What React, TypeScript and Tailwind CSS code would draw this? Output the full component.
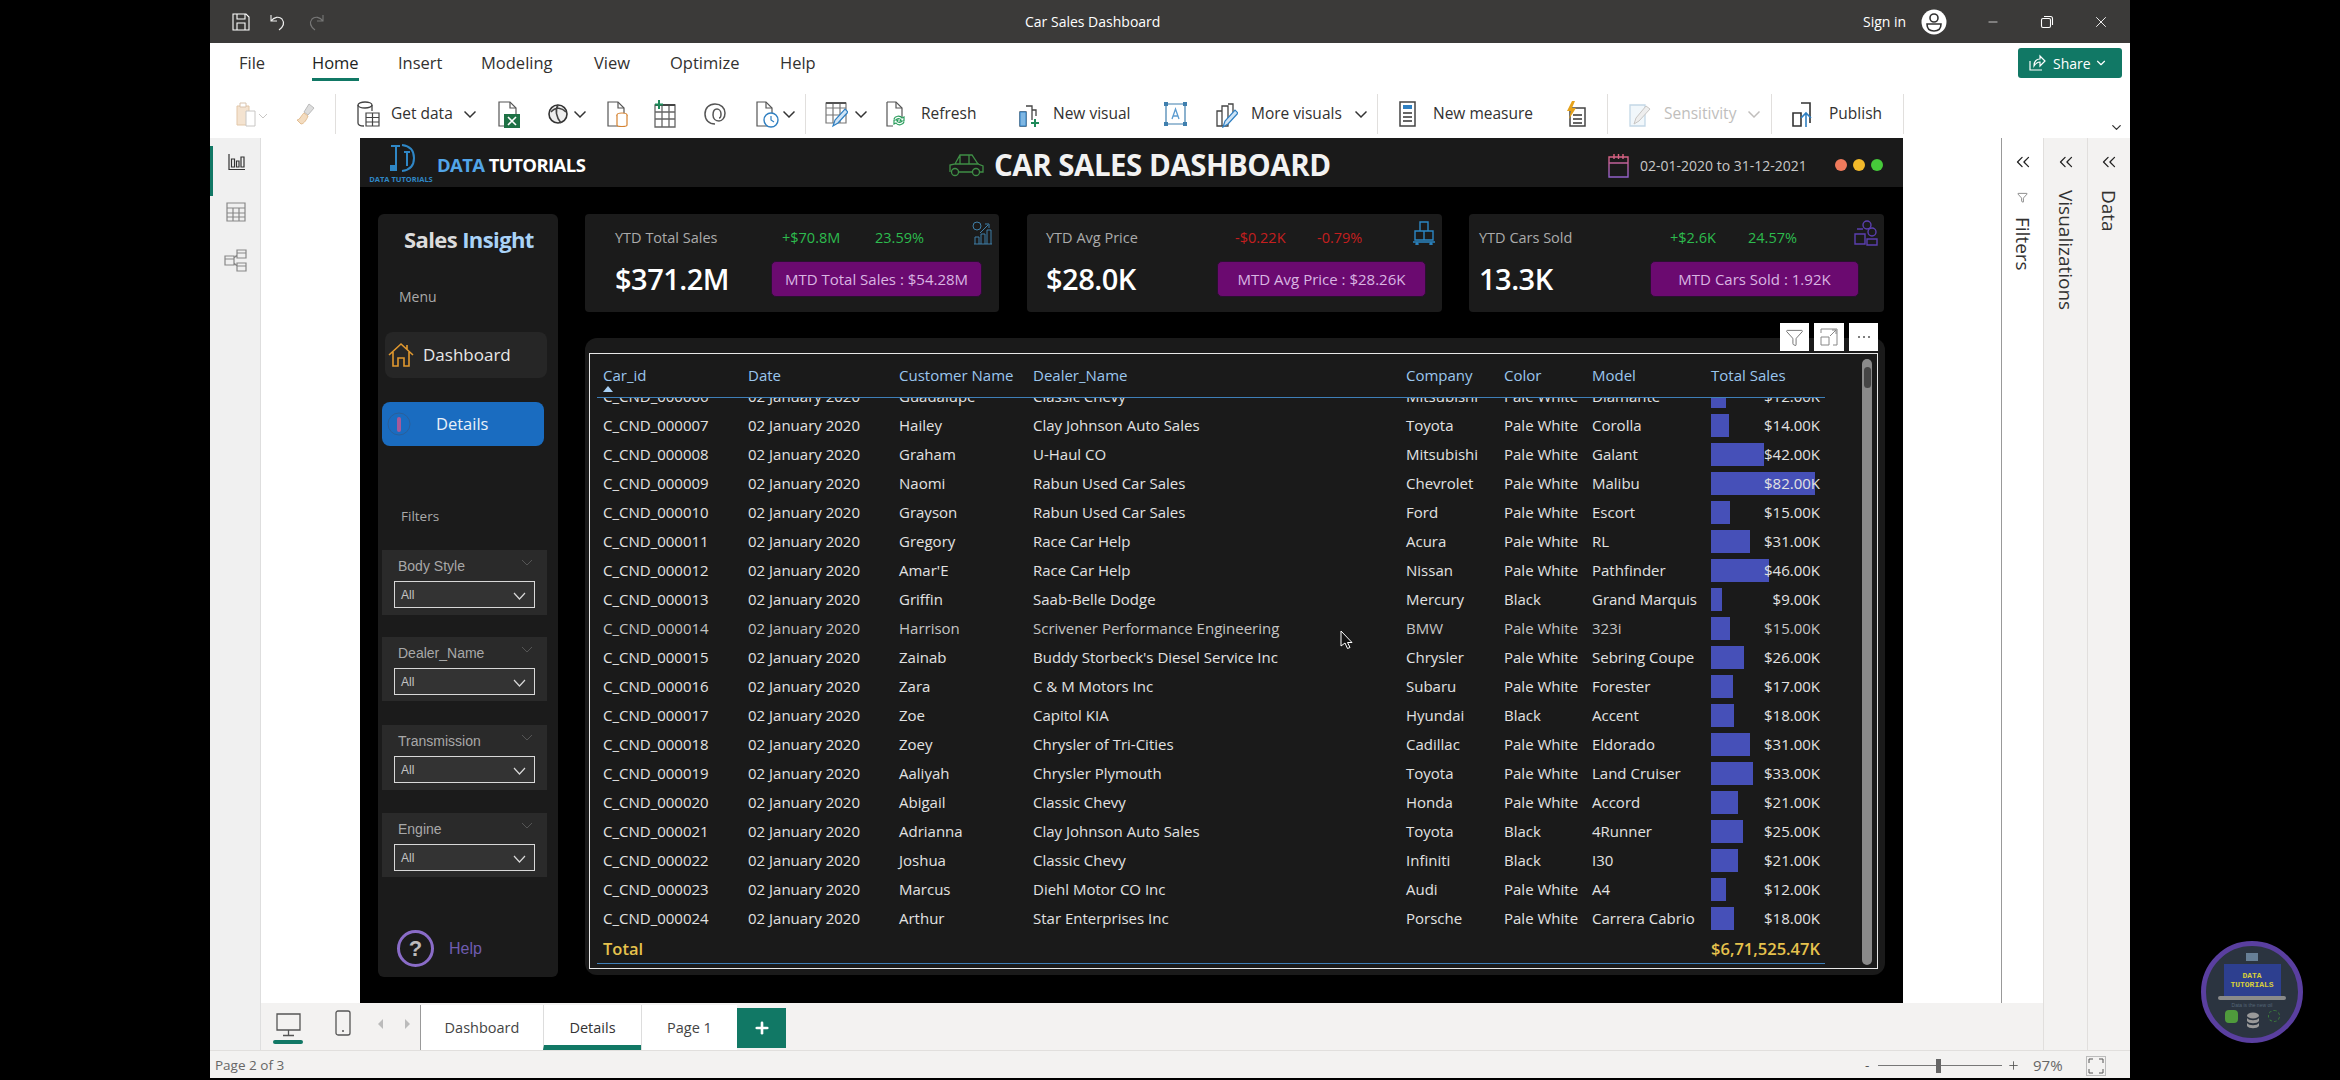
import { ChevronDown, ChevronsLeft, Minus, X, Plus, Filter } from "lucide-react";

type Row = {
  id: string;
  customer: string;
  dealer: string;
  company: string;
  color: string;
  model: string;
  sales: number;
};

const rows: Row[] = [
  { id: "006", customer: "Guadalupe", dealer: "Classic Chevy", company: "Mitsubishi", color: "Pale White", model: "Diamante", sales: 12 },
  { id: "007", customer: "Hailey", dealer: "Clay Johnson Auto Sales", company: "Toyota", color: "Pale White", model: "Corolla", sales: 14 },
  { id: "008", customer: "Graham", dealer: "U-Haul CO", company: "Mitsubishi", color: "Pale White", model: "Galant", sales: 42 },
  { id: "009", customer: "Naomi", dealer: "Rabun Used Car Sales", company: "Chevrolet", color: "Pale White", model: "Malibu", sales: 82 },
  { id: "010", customer: "Grayson", dealer: "Rabun Used Car Sales", company: "Ford", color: "Pale White", model: "Escort", sales: 15 },
  { id: "011", customer: "Gregory", dealer: "Race Car Help", company: "Acura", color: "Pale White", model: "RL", sales: 31 },
  { id: "012", customer: "Amar'E", dealer: "Race Car Help", company: "Nissan", color: "Pale White", model: "Pathfinder", sales: 46 },
  { id: "013", customer: "Griffin", dealer: "Saab-Belle Dodge", company: "Mercury", color: "Black", model: "Grand Marquis", sales: 9 },
  { id: "014", customer: "Harrison", dealer: "Scrivener Performance Engineering", company: "BMW", color: "Pale White", model: "323i", sales: 15 },
  { id: "015", customer: "Zainab", dealer: "Buddy Storbeck's Diesel Service Inc", company: "Chrysler", color: "Pale White", model: "Sebring Coupe", sales: 26 },
  { id: "016", customer: "Zara", dealer: "C & M Motors Inc", company: "Subaru", color: "Pale White", model: "Forester", sales: 17 },
  { id: "017", customer: "Zoe", dealer: "Capitol KIA", company: "Hyundai", color: "Black", model: "Accent", sales: 18 },
  { id: "018", customer: "Zoey", dealer: "Chrysler of Tri-Cities", company: "Cadillac", color: "Pale White", model: "Eldorado", sales: 31 },
  { id: "019", customer: "Aaliyah", dealer: "Chrysler Plymouth", company: "Toyota", color: "Pale White", model: "Land Cruiser", sales: 33 },
  { id: "020", customer: "Abigail", dealer: "Classic Chevy", company: "Honda", color: "Pale White", model: "Accord", sales: 21 },
  { id: "021", customer: "Adrianna", dealer: "Clay Johnson Auto Sales", company: "Toyota", color: "Black", model: "4Runner", sales: 25 },
  { id: "022", customer: "Joshua", dealer: "Classic Chevy", company: "Infiniti", color: "Black", model: "I30", sales: 21 },
  { id: "023", customer: "Marcus", dealer: "Diehl Motor CO Inc", company: "Audi", color: "Pale White", model: "A4", sales: 12 },
  { id: "024", customer: "Arthur", dealer: "Star Enterprises Inc", company: "Porsche", color: "Pale White", model: "Carrera Cabrio", sales: 18 },
];

const gridCols = "grid grid-cols-[145px_151px_134px_373px_98px_88px_119px_114px]";

const Sep = ({ className }: { className: string }) => <div className={`w-px h-[40px] bg-[#e1dfdd] shrink-0 ${className}`} />;

const Chev = ({ className, color = "#333" }: { className: string; color?: string }) => (
  <svg width="12" height="12" viewBox="0 0 12 12" fill="none" stroke={color} strokeWidth="1.5" className={`shrink-0 ${className}`}>
    <path d="M0.500 3.500l5.500 5.500 5.500-5.500" />
  </svg>
);

const Label = ({ className, children }: { className: string; children: React.ReactNode }) => (
  <span className={`shrink-0 whitespace-nowrap text-[15.500px] ${className}`}>{children}</span>
);

const Ico = ({ w, className, children }: { w: number; className?: string; children: React.ReactNode }) => (
  <svg width={w} height={28} viewBox={`0 0 ${w} 28`} fill="none" className={`shrink-0 ${className ?? ""}`}>
    {children}
  </svg>
);

const Toolbar = () => (
  <div className="flex items-center h-[40px] text-[#323130]">
    <Ico w={36} className="ml-[24px]">
      <path d="M3 6h12v19H3z" fill="#f4e3d0" stroke="#e3c7a8" />
      <path d="M6 3h6v4H6z" stroke="#d9c4ae" fill="#fff" />
      <path d="M12 11h9v15h-9z" fill="#fff" stroke="#c8c6c4" />
      <path d="M25 14l4 4 4-4" stroke="#c8c6c4" />
    </Ico>
    <Ico w={24} className="ml-[24px]">
      <path d="M15 4l5 4-6 7-4-3z" fill="#ddd" stroke="#bbb" />
      <path d="M3 20c3 0 5-6 7-7l4 3c-1 3-4 8-7 8z" fill="#f3dcc0" stroke="#e3bd91" />
    </Ico>
    <Sep className="ml-[17px]" />
    <Ico w={24} className="ml-[20px]">
      <ellipse cx="9" cy="5" rx="7" ry="3" stroke="#444" strokeWidth="1.3" />
      <path d="M2 5v18c0 2 3 3 6 3M16 5v6" stroke="#444" strokeWidth="1.3" />
      <path d="M10 13h13v13H10zM10 17.500h13M10 22h13M16.500 13v13" stroke="#444" strokeWidth="1.2" fill="#fff" />
    </Ico>
    <Label className="ml-[11px] w-[66px]">Get data</Label>
    <Chev className="ml-[7px]" />
    <Ico w={23} className="ml-[21px]">
      <path d="M2 2h11l6 6v18H2z" stroke="#555" strokeWidth="1.2" fill="#fff" />
      <path d="M13 2v6h6" stroke="#555" strokeWidth="1.2" />
      <rect x="7" y="14" width="16" height="14" fill="#1e7145" />
      <path d="M11 17l8 8M19 17l-8 8" stroke="#fff" strokeWidth="1.6" />
    </Ico>
    <Ico w={23} className="ml-[27px]">
      <circle cx="11" cy="14" r="9" stroke="#333" strokeWidth="1.6" fill="#eee" />
      <path d="M4 12c5-6 11-4 15 0M11 5c-3 5-2 12 3 18" stroke="#444" strokeWidth="1.6" />
    </Ico>
    <Chev className="ml-[4px]" />
    <Ico w={22} className="ml-[20px]">
      <path d="M2 2h10l6 6v18H2z" stroke="#555" strokeWidth="1.2" fill="#fff" />
      <path d="M12 2v6h6" stroke="#555" strokeWidth="1.2" />
      <ellipse cx="16" cy="15" rx="5" ry="2" stroke="#d5822f" strokeWidth="1.2" fill="#fff" />
      <path d="M11 15v10c0 2 10 2 10 0V15" stroke="#d5822f" strokeWidth="1.2" fill="#fff" />
    </Ico>
    <Ico w={22} className="ml-[26px]">
      <path d="M1 5h20v22H1zM1 12h20M1 19h20M8 5v22M15 5v22" stroke="#666" strokeWidth="1.3" />
      <path d="M1 5h20" stroke="#444" strokeWidth="2" />
      <path d="M5 0v9M1 4.500h8" stroke="#1e8a5a" strokeWidth="2" />
    </Ico>
    <Ico w={23} className="ml-[27px]">
      <path d="M12 24c-6 0-10-4-10-10S6 4 12 4s10 4 10 9-3 8-6 8-6-2-6-6 2-6 4-6 4 2 4 5-1 4-2 4" stroke="#555" strokeWidth="1.5" />
    </Ico>
    <Ico w={25} className="ml-[29px]">
      <path d="M2 2h9l6 6v18H2z" stroke="#555" strokeWidth="1.2" fill="#fff" />
      <path d="M11 2v6h6" stroke="#555" strokeWidth="1.2" />
      <circle cx="16" cy="20" r="7" stroke="#2f7fc1" strokeWidth="1.4" fill="#fff" />
      <path d="M16 16v4l3 2" stroke="#2f7fc1" strokeWidth="1.2" />
    </Ico>
    <Chev className="ml-[3px]" />
    <Sep className="ml-[10px]" />
    <Ico w={23} className="ml-[19px]">
      <path d="M1 3h20v20H1zM1 8h20M1 15h20M8 3v20M15 3v20" stroke="#777" strokeWidth="1.2" />
      <path d="M1 3h20" stroke="#555" strokeWidth="2" />
      <path d="M8 26l2-6 10-11 3 3-10 11z" fill="#cfe4f6" stroke="#2f7fc1" strokeWidth="1.2" />
    </Ico>
    <Chev className="ml-[7px]" />
    <Ico w={20} className="ml-[18px]">
      <path d="M2 2h9l6 6v9M2 2v24h6" stroke="#555" strokeWidth="1.2" />
      <path d="M11 2v6h6" stroke="#555" strokeWidth="1.2" />
      <path d="M9 19c1-3 6-4 8-1l2-1v4h-4l1-1c-1-2-4-2-5 0M19 22c-1 3-6 4-8 1l-2 1v-4h4l-1 1c1 2 4 2 5 0" stroke="#2a9d5c" strokeWidth="1.2" />
    </Ico>
    <Label className="ml-[16px] w-[56px]">Refresh</Label>
    <Ico w={23} className="ml-[41px]">
      <path d="M2 12h6v14H2zM8 6h6v14M14 10h4v6" stroke="#444" strokeWidth="1.3" />
      <path d="M2 12h6v14H2z" fill="#7fb7e3" stroke="#2f7fc1" />
      <path d="M17 19v8M13 23h8" stroke="#1e8a5a" strokeWidth="2" />
    </Ico>
    <Label className="ml-[12px] w-[83px]">New visual</Label>
    <Ico w={25} className="ml-[27px]">
      <path d="M3 4h19v20H3z" stroke="#3f7fae" strokeWidth="1.2" />
      <path d="M1 2h4v4H1zM20 2h4v4h-4zM1 22h4v4H1zM20 22h4v4h-4z" fill="#3f7fae" />
      <path d="M9 19l3.500-10L16 19M10 16h5" stroke="#5b9bd0" strokeWidth="1.3" />
    </Ico>
    <Ico w={23} className="ml-[27px]">
      <path d="M2 11h5v15H2zM7 6h6v20H7zM13 4h5v9" stroke="#444" strokeWidth="1.3" />
      <path d="M8 27l2-6 10-11 3 3-10 11z" fill="#cfe4f6" stroke="#2f7fc1" strokeWidth="1.2" />
    </Ico>
    <Label className="ml-[13px] w-[96px]">More visuals</Label>
    <Chev className="ml-[8px]" />
    <Sep className="ml-[10px]" />
    <Ico w={19} className="ml-[20px]">
      <path d="M2 2h15v24H2z" stroke="#444" strokeWidth="1.5" fill="#fff" />
      <path d="M5 5h9v4H5z" fill="#2f7fc1" />
      <path d="M5 12h9v2H5zM5 16h9v2H5zM5 20h9v2H5z" fill="#666" />
    </Ico>
    <Label className="ml-[16px] w-[105px]">New measure</Label>
    <Ico w={21} className="ml-[27px]">
      <path d="M5 8h15v18H5z" stroke="#444" strokeWidth="1.5" fill="#fff" />
      <path d="M8 14h9v2H8zM8 18h9v2H8zM8 22h9v2H8z" fill="#666" />
      <path d="M7 1L2 11h4l-2 8 7-11H7l3-7z" fill="#e5a21b" />
    </Ico>
    <Sep className="ml-[21px]" />
    <Ico w={24} className="ml-[20px]">
      <path d="M2 5h15v21H2z" stroke="#c3d7e6" strokeWidth="1.3" fill="#f1f7fb" />
      <path d="M6 24l2-6 10-12 4 3-11 12z" stroke="#c8c6c4" fill="#eee" />
    </Ico>
    <Label className="ml-[12px] w-[77px] text-[#c0bebc]">Sensitivity</Label>
    <Chev className="ml-[7px]" color="#c0bebc" />
    <Sep className="ml-[11px]" />
    <Ico w={23} className="ml-[20px]">
      <path d="M1 13h8v13H1zM9 3h9v20" stroke="#333" strokeWidth="1.6" />
      <path d="M14 27V13M9 18l5-5 5 5" stroke="#2f7fc1" strokeWidth="1.6" />
    </Ico>
    <Label className="ml-[14px] w-[55px]">Publish</Label>
    <Sep className="ml-[19px]" />
  </div>
);

const Ribbon = () => (
  <div className="relative h-[95px] bg-white shrink-0">
    <div className="flex items-start h-[50px] text-[16.500px] text-[#323130] whitespace-nowrap">
      <span className="ml-[29px] w-[29px] mt-[8px]">File</span>
      <span className="ml-[44px] w-[47px] h-[38px] pt-[8px] font-medium text-[#201f1e] border-b-[3px] border-[#117865]">Home</span>
      <span className="ml-[39px] w-[42px] mt-[8px]">Insert</span>
      <span className="ml-[41px] w-[73px] mt-[8px]">Modeling</span>
      <span className="ml-[40px] w-[38px] mt-[8px]">View</span>
      <span className="ml-[38px] w-[70px] mt-[8px]">Optimize</span>
      <span className="ml-[40px] w-[36px] mt-[8px]">Help</span>
      <div className="ml-auto mr-[8px] mt-[5px] w-[104px] h-[30px] rounded-[3px] bg-[#117865] flex items-center pl-[9px] text-white text-[14px]">
        <svg width="20" height="20" viewBox="0 0 20 20" fill="none" stroke="#fff" strokeWidth="1.2">
          <path d="M3 8v9h12M7 13c0-5 3-7 6-7V3l5 5-5 5V9c-2 0-4 1-6 4z" />
        </svg>
        <span className="ml-[6px]">Share</span>
        <ChevronDown size={14} className="ml-[3px]" />
      </div>
    </div>
    <div className="pt-[1px]">
      <Toolbar />
    </div>
    <ChevronDown size={15} strokeWidth={2} color="#333" className="absolute right-[6px] bottom-[3px]" />
  </div>
);

const TitleBar = () => (
  <div className="h-[43px] bg-[#3b3a39] flex items-center text-white shrink-0 whitespace-nowrap">
    <svg width="20" height="20" viewBox="0 0 20 20" fill="none" stroke="#fff" strokeWidth="1.1" className="ml-[21px]">
      <path d="M2 2h13l3 3v13H2zM6 2v5h8V2M6 18v-7h8v7" />
    </svg>
    <svg width="20" height="20" viewBox="0 0 20 20" fill="none" stroke="#eee" strokeWidth="1.1" className="ml-[17px]">
      <path d="M3 3v6h6M3 9c3-4 8-5 11-2 3 4 1 8-3 11" />
    </svg>
    <svg width="20" height="20" viewBox="0 0 20 20" fill="none" stroke="#777" strokeWidth="1.1" className="ml-[18px]">
      <path d="M17 3v6h-6M17 9c-3-4-8-5-11-2-3 4-1 8 3 11" />
    </svg>
    <span className="ml-[699px] w-[136px] text-[14px]">Car Sales Dashboard</span>
    <span className="ml-[702px] w-[46px] text-[14px]">Sign in</span>
    <svg width="26" height="26" viewBox="0 0 26 26" className="ml-[12px]">
      <circle cx="13" cy="13" r="12.500" fill="#fff" />
      <circle cx="13" cy="9" r="4" fill="none" stroke="#333" strokeWidth="1.6" />
      <path d="M6 15h14c0 5-3 7-7 7s-7-2-7-7z" fill="none" stroke="#333" strokeWidth="1.6" />
    </svg>
    <Minus size={14} strokeWidth={1.2} className="ml-[39px]" />
    <svg width="14" height="14" viewBox="0 0 14 14" fill="none" stroke="#fff" strokeWidth="1.1" className="ml-[40px]">
      <rect x="1.500" y="3.500" width="9" height="9" rx="1.500" />
      <path d="M4 1.500h6.500a2 2 0 0 1 2 2V10" />
    </svg>
    <X size={18} strokeWidth={1.2} className="ml-[38px]" />
  </div>
);

const Rail = () => (
  <div className="w-[51px] shrink-0 bg-[#f0f0f0] border-r border-[#dedede] flex flex-col items-center relative">
    <div className="absolute left-0 top-[8px] w-[3px] h-[50px] bg-[#117865]" />
    <svg width="18" height="18" viewBox="0 0 18 18" fill="none" stroke="#333" strokeWidth="1.2" className="mt-[15px] ml-[3px]">
      <path d="M1 1v15.500h16M3.500 6h3v8h-3zM8.500 8h2.500v6H8.500zM13 4h3v10h-3z" />
    </svg>
    <svg width="20" height="20" viewBox="0 0 20 20" fill="none" stroke="#888" strokeWidth="1.2" className="mt-[31px] ml-[1px]">
      <path d="M1 1h18v18H1zM1 6h18M1 11h18M1 15h18M7 6v13M13 6v13" />
    </svg>
    <svg width="23" height="23" viewBox="0 0 23 23" fill="none" stroke="#888" strokeWidth="1.2" className="mt-[27px]">
      <path d="M1 7h9v9H1zM1 10h9M13 1h9v8h-9zM13 4h9M13 14h9v8h-9zM13 17h9M10 9l3-3M10 14l3 3" />
    </svg>
  </div>
);

const Logo = () => (
  <div className="w-[62px] ml-[10px] -mt-[5px] h-[49px] flex flex-col items-center shrink-0">
    <svg width="30" height="32" viewBox="0 0 30 32" fill="none" stroke="#2f87c6" strokeWidth="2" className="mt-[5px]">
      <path d="M5 3h9M10 3v25M16 2c8 1 12 6 12 13s-4 12-12 13M18 9h6M21 9v14" />
      <path d="M4 22h5v6H4z" fill="#2f87c6" stroke="none" />
    </svg>
    <span className="text-[7.500px] font-bold text-[#2f87c6] whitespace-nowrap leading-[9px]">DATA TUTORIALS</span>
  </div>
);

const ReportHeader = () => (
  <div className="h-[49px] pt-[5px] bg-[#1a1a1a] flex items-center shrink-0">
    <Logo />
    <span className="ml-[5px] w-[149px] text-[18.500px] font-bold whitespace-nowrap tracking-[-0.6px]">
      <span className="text-[#52a5e8]">DATA </span>
      <span className="text-white">TUTORIALS</span>
    </span>
    <svg width="37" height="26" viewBox="0 0 37 26" fill="none" stroke="#3f8f46" strokeWidth="1.3" className="ml-[362px]">
      <path d="M2 20v-7l5-1 5-9h12l6 9 5 2v6h-3M10 20h14M12 3v9M7 12h24M21 3v9" />
      <circle cx="7" cy="20" r="3.500" />
      <circle cx="28" cy="20" r="3.500" />
    </svg>
    <span className="ml-[9px] w-[340px] text-[29.500px] font-bold text-[#f2f2f2] whitespace-nowrap leading-none tracking-[-0.5px]">CAR SALES DASHBOARD</span>
    <svg width="21" height="27" viewBox="0 0 21 27" fill="none" strokeWidth="1.4" className="ml-[274px]">
      <defs>
        <linearGradient id="cal" x1="0" y1="0" x2="0" y2="1">
          <stop offset="0" stopColor="#e0627a" />
          <stop offset="1" stopColor="#8f5fc8" />
        </linearGradient>
      </defs>
      <path d="M1 5h19v20H1zM1 11h19M6 2v5M10.500 2v5M15 2v5" stroke="url(#cal)" />
    </svg>
    <span className="ml-[11px] w-[168px] text-[14px] text-[#c8c8c8] whitespace-nowrap">02-01-2020 to 31-12-2021</span>
    <div className="ml-[27px] flex gap-[6px]">
      <div className="w-[12px] h-[12px] rounded-full bg-[#ef7a5c]" />
      <div className="w-[12px] h-[12px] rounded-full bg-[#f2b92a]" />
      <div className="w-[12px] h-[12px] rounded-full bg-[#46c93a]" />
    </div>
  </div>
);

const Slicer = ({ title, className }: { title: string; className: string }) => (
  <div className={`ml-[4px] w-[165px] bg-[#2a2a2a] ${className}`}>
    <div className="flex items-center justify-between h-[31px] pl-[16px] pr-[14px] pt-[1px] text-[14px] text-[#a8a8a8]">
      <span>{title}</span>
      <svg width="12" height="8" viewBox="0 0 12 8" fill="none" stroke="#555" className="-mt-[6px]">
        <path d="M1 1l5 5 5-5" />
      </svg>
    </div>
    <div className="ml-[12px] w-[141px] h-[27px] border-[1.5px] border-[#d8d8d8] bg-[#333333] flex items-center justify-between pl-[6px] pr-[8px] text-[12px] text-[#c4c4c4]">
      <span>All</span>
      <svg width="13" height="8" viewBox="0 0 13 8" fill="none" stroke="#d8d8d8" strokeWidth="1.2" className="mt-[3px]">
        <path d="M1 1l5.500 6L12 1" />
      </svg>
    </div>
  </div>
);

const Sidebar = () => (
  <div className="w-[180px] h-[763px] rounded-md bg-[#1b1b1b] flex flex-col font-['Liberation_Sans',sans-serif] shrink-0">
    <div className="mt-[11px] h-[28px] pl-[26px] text-[22px] font-bold leading-[28px] whitespace-nowrap font-['Open_Sans',sans-serif] tracking-[-0.6px]">
      <span className="text-[#dcdcdc]">Sales </span>
      <span className="text-[#a9d2f7]">Insight</span>
    </div>
    <div className="mt-[34px] h-[20px] pl-[21px] text-[14px] text-[#aaaaaa] leading-[20px] font-['Open_Sans',sans-serif]">Menu</div>
    <div className="mt-[25px] ml-[7px] w-[162px] h-[46px] rounded-lg bg-[#262626] flex items-center pl-[3px]">
      <svg width="26" height="26" viewBox="0 0 26 26" fill="none" stroke="#e0982f" strokeWidth="1.6">
        <path d="M1 13L13 2l12 11M5 10v14h5v-8h6v8h5V10M19 3v4" />
      </svg>
      <span className="ml-[9px] text-[17px] text-[#e8e8e8] font-['Open_Sans',sans-serif]">Dashboard</span>
    </div>
    <div className="mt-[24px] ml-[4px] w-[162px] h-[44px] rounded-lg bg-[#1a6cc0] flex items-center pl-[5px]">
      <svg width="24" height="26" viewBox="0 0 24 26" fill="none">
        <circle cx="12" cy="13" r="11" stroke="#2a5f9a" />
        <rect x="10" y="6" width="4" height="15" rx="2" fill="#a65a9a" />
      </svg>
      <span className="ml-[25px] text-[16.500px] text-[#e8f0f8] font-['Open_Sans',sans-serif]">Details</span>
    </div>
    <div className="mt-[60px] h-[20px] pl-[23px] text-[13.500px] text-[#aaaaaa] leading-[20px] font-['Open_Sans',sans-serif]">Filters</div>
    <Slicer title="Body Style" className="mt-[24px] h-[65px]" />
    <Slicer title="Dealer_Name" className="mt-[22px] h-[64px]" />
    <Slicer title="Transmission" className="mt-[24px] h-[65px]" />
    <Slicer title="Engine" className="mt-[23px] h-[64px]" />
    <div className="mt-[53px] pl-[19px] flex items-center">
      <div className="w-[37px] h-[37px] rounded-full border-[3px] border-[#8a6cc8] flex items-center justify-center text-[22px] font-bold text-[#bbbbbb]">?</div>
      <span className="ml-[15px] text-[16px] text-[#6f5cb0]">Help</span>
    </div>
  </div>
);

type KpiProps = {
  label: string;
  value: string;
  delta: string;
  pct: string;
  button: string;
  negative?: boolean;
  card: string;
  labelW: string;
  deltaW: string;
  valueW: string;
  buttonW: string;
  icon: React.ReactNode;
};

const Kpi = ({ label, value, delta, pct, button, negative, card, labelW, deltaW, valueW, buttonW, icon }: KpiProps) => {
  const tone = negative ? "text-[#c41f1f]" : "text-[#2dbb4e]";
  return (
    <div className={`h-[98px] bg-[#1b1b1b] shrink-0 rounded-sm ${card}`}>
      <div className="pt-[14px] h-[34px] flex items-center text-[14.500px] whitespace-nowrap">
        <span className={`text-[#ababab] ${labelW}`}>{label}</span>
        <span className={`${tone} ${deltaW}`}>{delta}</span>
        <span className={tone}>{pct}</span>
        <div className="ml-auto mr-[6px] -mt-[11px]">{icon}</div>
      </div>
      <div className="mt-[13px] flex items-center">
        <span className={`text-[29px] leading-[36px] font-semibold text-white whitespace-nowrap tracking-[-0.5px] ${valueW}`}>{value}</span>
        <div className={`h-[36px] rounded-[5px] bg-[#6b0a70] border border-[#2a1030] flex items-center justify-center text-[15px] text-[#d9b5e2] whitespace-nowrap ${buttonW}`}>
          {button}
        </div>
      </div>
    </div>
  );
};

const chartIcon = (
  <svg width="21" height="24" viewBox="0 0 21 24" fill="none" stroke="#3f7fa8" strokeWidth="1">
    <circle cx="5" cy="5" r="4" />
    <path d="M2 23h18M3 23v-7h4v7M9 23v-10h4v10M15 23V9h4v14M8 12l8-8M13 3h4v4" />
  </svg>
);

const crateIcon = (
  <svg width="24" height="24" viewBox="0 0 24 24" fill="none" stroke="#2b86c4" strokeWidth="1.4">
    <path d="M8 1h8v9H8zM3 10h9v9H3zM12 10h9v9h-9zM1 21h22" />
    <circle cx="5" cy="23" r="1" />
    <circle cx="19" cy="23" r="1" />
  </svg>
);

const coinsIcon = (
  <svg width="24" height="26" viewBox="0 0 24 26" fill="none" stroke="#5b3fb0" strokeWidth="1.4">
    <circle cx="13" cy="5" r="4" />
    <circle cx="18" cy="12" r="4" />
    <path d="M1 14h10v10H1zM13 19h10v6H13zM3 9h6" />
  </svg>
);

const DataTable = () => (
  <div className="relative mt-[26px] w-[1300px] h-[637px] rounded-xl bg-[#1a1a1a] pl-[4px] pt-[15px]">
    <div className="absolute -top-[15px] right-[7px] flex gap-[5px]">
      <div className="w-[29px] h-[28px] bg-white flex items-center justify-center">
        <Filter size={19} strokeWidth={1} color="#555" />
      </div>
      <div className="w-[30px] h-[28px] bg-white flex items-center justify-center">
        <svg width="18" height="18" viewBox="0 0 18 18" fill="none" stroke="#888" strokeWidth="1">
          <path d="M1 9h8v8H1zM1 5V1h16v16h-4M10 8l6-6M12 2h4v4" />
        </svg>
      </div>
      <div className="w-[29px] h-[28px] bg-white flex items-center justify-center gap-[3px]">
        <div className="w-[2px] h-[2px] rounded-full bg-[#555]" />
        <div className="w-[2px] h-[2px] rounded-full bg-[#555]" />
        <div className="w-[2px] h-[2px] rounded-full bg-[#555]" />
      </div>
    </div>
    <div className="relative w-[1289px] h-[616px] border-[1.5px] border-[#e8e8e8] pl-[7px] text-[15px]">
      <div className={`relative h-[44px] w-[1228px] pl-[6px] pt-[11px] border-b-[1.5px] border-[#3f7fb8] text-[#9ac6ee] ${gridCols}`}>
        {["Car_id", "Date", "Customer Name", "Dealer_Name", "Company", "Color", "Model", "Total Sales"].map((h) => (
          <span key={h} className="whitespace-nowrap leading-[20px]">{h}</span>
        ))}
        <div className="absolute left-[6px] top-[32px] w-0 h-0 border-l-[5px] border-r-[5px] border-b-[6px] border-l-transparent border-r-transparent border-b-[#a8d0f5]" />
      </div>
      <div className="h-[535px] w-[1228px] overflow-hidden">
        <div className="-mt-[16px]">
          {rows.map((r) => (
            <div key={r.id} className={`h-[29px] pl-[6px] items-center whitespace-nowrap ${r.id === "014" ? "text-[#c4c4c4]" : "text-[#e2e2e2]"} ${gridCols}`}>
              <span>C_CND_000{r.id}</span>
              <span>02 January 2020</span>
              <span>{r.customer}</span>
              <span>{r.dealer}</span>
              <span>{r.company}</span>
              <span>{r.color}</span>
              <span>{r.model}</span>
              <div className="relative h-[29px] flex items-center justify-end pr-[5px]">
                <div className="absolute left-0 top-[3px] h-[23px] bg-[#4650b8]" style={{ width: `${r.sales * 1.27}px` }} />
                <span className="relative">${r.sales.toFixed(2)}K</span>
              </div>
            </div>
          ))}
        </div>
      </div>
      <div className={`h-[31px] w-[1228px] pl-[6px] pt-[2px] items-center border-b-[1.5px] border-[#3f7fb8] text-[#e6c24d] font-semibold text-[16.500px] ${gridCols}`}>
        <span>Total</span>
        <span />
        <span />
        <span />
        <span />
        <span />
        <span />
        <span className="text-right pr-[5px] whitespace-nowrap">$6,71,525.47K</span>
      </div>
      <div className="absolute right-[5px] top-[5px] w-[10px] h-[606px] rounded-full bg-[#8a8a8a] px-[1.500px] pt-[8px]">
        <div className="h-[21px] rounded-full bg-[#454545]" />
      </div>
    </div>
  </div>
);

const Report = () => (
  <div className="w-[1543px] h-[865px] bg-black flex flex-col shrink-0">
    <ReportHeader />
    <div className="flex pt-[27px] pl-[18px]">
      <Sidebar />
      <div className="ml-[27px] w-[1300px]">
        <div className="flex">
          <Kpi
            label="YTD Total Sales"
            value="$371.2M"
            delta="+$70.8M"
            pct="23.59%"
            button="MTD Total Sales : $54.28M"
            card="w-[414px] pl-[30px]"
            labelW="w-[167px]"
            deltaW="w-[93px]"
            valueW="w-[156px]"
            buttonW="w-[211px]"
            icon={chartIcon}
          />
          <Kpi
            label="YTD Avg Price"
            value="$28.0K"
            delta="-$0.22K"
            pct="-0.79%"
            negative
            button="MTD Avg Price : $28.26K"
            card="w-[415px] ml-[28px] pl-[19px]"
            labelW="w-[189px]"
            deltaW="w-[82px]"
            valueW="w-[171px]"
            buttonW="w-[209px]"
            icon={crateIcon}
          />
          <Kpi
            label="YTD Cars Sold"
            value="13.3K"
            delta="+$2.6K"
            pct="24.57%"
            button="MTD Cars Sold : 1.92K"
            card="w-[415px] ml-[27px] pl-[10px]"
            labelW="w-[191px]"
            deltaW="w-[78px]"
            valueW="w-[171px]"
            buttonW="w-[209px]"
            icon={coinsIcon}
          />
        </div>
        <DataTable />
      </div>
    </div>
  </div>
);

const SidePanel = ({ label, className, funnel }: { label: string; className: string; funnel?: boolean }) => (
  <div className={`shrink-0 flex flex-col items-center pt-[13px] ${className}`}>
    <ChevronsLeft size={22} strokeWidth={1.4} color="#222" />
    {funnel && <Filter size={11} strokeWidth={1.2} color="#333" className="mt-[19px]" />}
    <span className={`${funnel ? "mt-[14px]" : "mt-[17px]"} [writing-mode:vertical-rl] text-[19px] leading-[22px] text-[#323130] whitespace-nowrap`}>{label}</span>
  </div>
);

const PageTabs = () => (
  <div className="h-[47px] bg-[#f3f2f1] flex items-end shrink-0">
    <div className="w-[159px] h-[45px] flex items-start shrink-0">
      <div className="ml-[12px] mt-[7px] flex flex-col items-center">
        <svg width="25" height="26" viewBox="0 0 25 26" fill="none" stroke="#555" strokeWidth="1.3">
          <path d="M1 2h23v16H1zM12.500 18v5M7 23.500h11" />
        </svg>
        <div className="w-[30px] h-[4px] rounded-full bg-[#117865] mt-[2px]" />
      </div>
      <svg width="16" height="26" viewBox="0 0 16 26" fill="none" stroke="#555" strokeWidth="1.3" className="ml-[32px] mt-[5px]">
        <rect x="1" y="1" width="14" height="24" rx="2" />
        <path d="M7 21h2" />
      </svg>
      <div className="ml-[27px] mt-[14px] flex gap-[22px]">
        <div className="w-0 h-0 border-y-[5px] border-r-[5px] border-y-transparent border-r-[#bbbbbb]" />
        <div className="w-0 h-0 border-y-[5px] border-l-[5px] border-y-transparent border-l-[#bbbbbb]" />
      </div>
    </div>
    <div className="w-[123px] h-[45px] bg-white border-l border-[#999] flex items-center justify-center text-[14.500px] text-[#444]">Dashboard</div>
    <div className="w-[98px] h-[45px] pt-[5px] bg-white border-l border-[#ddd] border-b-[5px] border-b-[#117865] flex items-center justify-center text-[14.500px] font-medium text-[#333]">Details</div>
    <div className="w-[96px] h-[45px] bg-white border-l border-[#ddd] flex items-center justify-center text-[14.500px] text-[#444]">Page 1</div>
    <div className="w-[49px] h-[40px] mb-[2px] bg-[#117865] flex items-center justify-center">
      <Plus size={18} strokeWidth={3.5} color="#fff" />
    </div>
  </div>
);

const StatusBar = () => (
  <div className="h-[28px] pt-[2px] bg-[#f3f2f1] border-t border-[#e1dfdd] flex items-center text-[13.500px] text-[#666] shrink-0 whitespace-nowrap">
    <span className="ml-[5px] w-[80px]">Page 2 of 3</span>
    <span className="ml-[1570px] w-[8px] text-[#555]">-</span>
    <div className="ml-[5px] w-[124px] h-px bg-[#777] flex items-center pl-[58px]">
      <div className="w-[5px] h-[14px] bg-[#666]" />
    </div>
    <Plus size={13} strokeWidth={1.6} color="#555" className="ml-[5px]" />
    <span className="ml-[13px] w-[36px] text-[15px]">97%</span>
    <svg width="20" height="20" viewBox="0 0 20 20" fill="none" className="ml-[17px]">
      <rect x="0.500" y="0.500" width="19" height="19" stroke="#bbb" />
      <path d="M3 7V3h4M13 3h4v4M3 13v4h4M13 17h4v-4" stroke="#555" />
    </svg>
  </div>
);

const Badge = () => (
  <div className="ml-[71px] mt-[941px] w-[102px] h-[102px] rounded-full border-[5px] border-[#5a3fa0] bg-[#2b3440] flex flex-col items-center shrink-0">
    <div className="mt-[7px] w-[12px] h-[8px] bg-[#8fb3d0] opacity-60" />
    <div className="mt-[3px] w-[57px] h-[32px] bg-[#2d3f8f] flex flex-col items-center justify-center text-[8px] leading-[9px] font-bold text-[#d8cf3a] font-['Liberation_Mono',monospace]">
      <span>DATA</span>
      <span>TUTORIALS</span>
    </div>
    <div className="w-[68px] h-[4px] bg-[#8a8a8a] rounded-sm" />
    <div className="mt-[2px] text-[5px] leading-[7px] text-[#556677] font-['Liberation_Sans',sans-serif] whitespace-nowrap">Data is the new oil</div>
    <div className="mt-[1px] flex items-start gap-[8px]">
      <div className="w-[13px] h-[13px] bg-[#4f9a3c] rounded-sm" />
      <svg width="14" height="18" viewBox="0 0 14 18" className="mt-[2px]">
        <ellipse cx="7" cy="3.500" rx="6" ry="3" fill="#999" />
        <path d="M1 6c2 3 10 3 12 0v3c-2 3-10 3-12 0zM1 11c2 3 10 3 12 0v3c-2 3-10 3-12 0z" fill="#999" />
      </svg>
      <div className="w-[12px] h-[12px] rounded-full border border-dashed border-[#3c7a3c]" />
    </div>
  </div>
);

export default function App() {
  return (
    <div className="relative w-[2340px] h-[1080px] bg-black flex overflow-hidden font-['Open_Sans',sans-serif]">
      <div className="ml-[210px] w-[1920px] h-[1078px] flex flex-col shrink-0">
        <TitleBar />
        <Ribbon />
        <div className="h-[912px] flex shrink-0">
          <Rail />
          <div className="w-[1782px] flex flex-col shrink-0">
            <div className="h-[865px] flex shrink-0 bg-white">
              <div className="w-[99px] shrink-0" />
              <Report />
              <div className="w-[99px] shrink-0 border-r border-[#999]" />
              <SidePanel label="Filters" funnel className="w-[41px]" />
            </div>
            <PageTabs />
          </div>
          <SidePanel label="Visualizations" className="w-[44px] bg-[#f3f2f1] border-l border-[#e1dfdd]" />
          <SidePanel label="Data" className="w-[43px] bg-[#f3f2f1] border-l border-[#e1dfdd]" />
        </div>
        <StatusBar />
      </div>
      <Badge />
      <svg width="14" height="20" viewBox="0 0 14 20" className="absolute left-[1340px] top-[630px]">
        <path d="M1 1v15l4-3 2.500 5.500 2.500-1L7.500 12.500H12z" fill="#111" stroke="#fff" strokeWidth="1" />
      </svg>
    </div>
  );
}
